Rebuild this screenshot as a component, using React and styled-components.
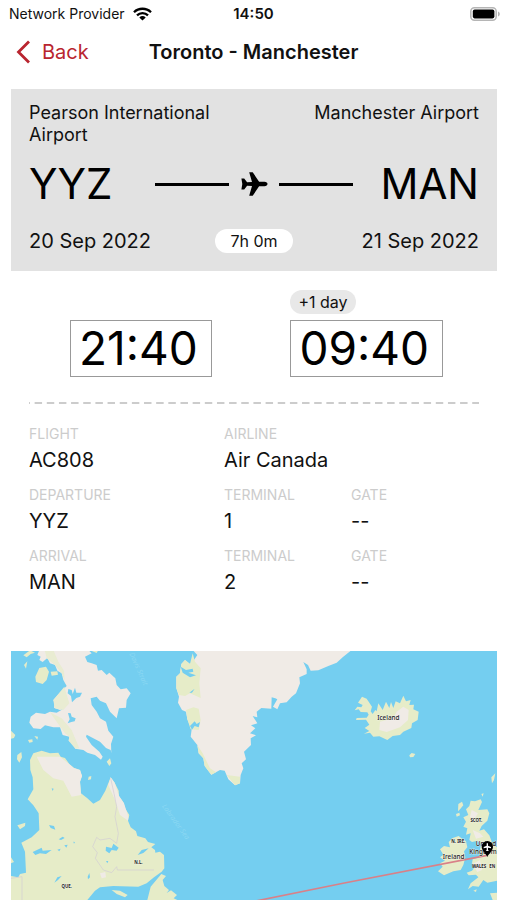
import React from 'react';
import styled, { createGlobalStyle } from 'styled-components';


const GlobalStyle = createGlobalStyle`
  * {
    box-sizing: border-box;
  }
  body {
    margin: 0;
    background: #fff;
    color: #111;
    font-family: Inter, 'Liberation Sans', sans-serif;
  }
  `;

// declare styled components
const StatusBar = styled.div`
  display: grid;
  grid-template-columns: 1fr auto 1fr;
  align-items: center;
  height: 27px;
  padding: 0 7px;
  font-size: 14px;
  `;

const Carrier = styled.div`
  display: flex;
  align-items: center;
  gap: 8px;
  padding-left: 2px;
  white-space: nowrap;
  `;

const Clock = styled.time`
  font-size: 15px;
  font-weight: 600;
  `;

const BatteryIcon = styled.svg`
  justify-self: end;
  `;

const NavBar = styled.header`
  display: grid;
  grid-template-columns: 1fr auto 1fr;
  align-items: center;
  height: 49px;
  padding: 0 16px;
  `;

const BackButton = styled.button`
  display: flex;
  align-items: center;
  gap: 11px;
  justify-self: start;
  padding: 0;
  border: 0;
  background: none;
  color: #b9252f;
  font: inherit;
  font-size: 20px;
  cursor: pointer;
  `;

const Title = styled.h1`
  margin: 0;
  font-size: 20px;
  font-weight: 600;
  white-space: nowrap;
  `;

const Main = styled.main`
  padding: 13px 10px 0 11px;
  `;

const RouteCard = styled.section`
  padding: 13px 18px 16px;
  background: #e2e2e2;
  `;

const Row = styled.div`
  display: flex;
  justify-content: space-between;
  align-items: ${props => props.$align || 'center'};
  `;

const Airport = styled.p`
  width: 200px;
  margin: 0;
  font-size: 18px;
  line-height: 22px;
  text-align: ${props => (props.$end ? 'right' : 'left')};
  `;

const CenteredRow = styled.div`
  display: grid;
  grid-template-columns: 1fr auto 1fr;
  align-items: center;
  margin-top: ${props => props.$gap}px;
  `;

const Code = styled.span`
  font-size: 42px;
  line-height: 54px;
  color: #000;
  text-align: ${props => (props.$end ? 'right' : 'left')};
  `;

const Path = styled.div`
  display: flex;
  align-items: center;
  gap: 11px;
  color: #000;
  `;

const Line = styled.span`
  width: 74px;
  height: 3px;
  background: #000;
  `;

const FlightDate = styled.time`
  font-size: 20px;
  line-height: 28px;
  text-align: ${props => (props.$end ? 'right' : 'left')};
  `;

const Pill = styled.span`
  padding: 0 ${props => (props.$wide ? 15 : 8)}px;
  border-radius: 12px;
  background: ${props => (props.$wide ? '#fff' : '#e8e8e8')};
  font-size: 16px;
  line-height: 24px;
  `;

const Times = styled(Row)`
  padding: 19px 54px 0 59px;
  `;

const TimeSlot = styled.div`
  display: flex;
  flex-direction: column;
  align-items: flex-start;
  gap: 6px;
  `;

const TimeBox = styled.time`
  padding: 0 13px 0 8px;
  border: 1px solid #999;
  font-size: 46px;
  line-height: 55px;
  color: #000;
  `;

const Divider = styled.hr`
  height: 2px;
  margin: 25px 18px 0;
  border: 0;
  background-image: linear-gradient(90deg, #ccc 1px, transparent 1px 6px, #ccc 6px);
  background-size: calc(100% / 37) 2px;
  `;

const Details = styled.dl`
  display: grid;
  grid-template-columns: 195fr 127fr 128fr;
  row-gap: 8px;
  margin: 19px 18px 53px;
  `;

const Field = styled.div`
  grid-column: ${props => (props.$wide ? 'span 2' : 'auto')};
  `;

const Label = styled.dt`
  color: #ccc;
  font-size: 14px;
  line-height: 21px;
  text-transform: uppercase;
  `;

const Value = styled.dd`
  margin: 0;
  font-size: 20px;
  line-height: 32px;
  `;

const MapSvg = styled.svg`
  display: block;
  width: 100%;
  height: auto;
  background: #74cef0;
  font-family: 'Noto Sans', sans-serif;
  `;

const fields = [
  { label: 'Flight', value: 'AC808' },
  { label: 'Airline', value: 'Air Canada', wide: true },
  { label: 'Departure', value: 'YYZ' },
  { label: 'Terminal', value: '1' },
  { label: 'Gate', value: '--' },
  { label: 'Arrival', value: 'MAN' },
  { label: 'Terminal', value: '2' },
  { label: 'Gate', value: '--' }
];

const WifiIcon = () => (
  <svg width='19' height='14' viewBox='0 0 19 14' aria-hidden='true'>
    <g fill='none' stroke='#000' strokeWidth='2.3'>
      <path d='M1 5.2a12.2 12.2 0 0 1 17 0'/>
      <path d='M4 8.4a7.9 7.9 0 0 1 11 0'/>
    </g>
    <path d='M9.5 13.5 6.3 10.4a4.7 4.7 0 0 1 6.4 0z'/>
  </svg>
);

const PlaneIcon = () => (
  <svg width='28' height='26' viewBox='0 0 28 26' aria-hidden='true'>
    <path d='M1.4 7.6h2.8l2.9 3.7 4.9-.4L9.2 1.2h3.5l6.4 9.5 5.4.1c1.8.1 3 1 3 2.2s-1.2 2.1-3 2.2l-5.4.1-6.4 9.5H9.2l2.8-9.7-4.9-.4-2.9 3.7H1.4l.9-5.4z'/>
  </svg>
);

const Battery = () => (
  <BatteryIcon width='30' height='14' viewBox='0 0 30 14' role='img' aria-label='Battery full'>
    <rect x='.8' y='.8' width='25.4' height='12.4' rx='3.6' fill='#fff' stroke='#b5b5b5' strokeWidth='1.5'/>
    <rect x='2.8' y='2.6' width='21.6' height='8.8' rx='1.8'/>
    <path d='M28 4.6c2.4.8 2.4 4 0 4.8z' fill='#b5b5b5'/>
  </BatteryIcon>
);

const RouteMap = () => (
  <MapSvg viewBox='0 0 1458 747' role='img' aria-label='Flight route map'>
    {/* Baffin Island and its neighbours */}
    <g transform='translate(-33 -33)' fill='#f0ebe6'>
      <path d='M118 30 112 45 122 50 118 60 128 66 142 54 150 70 165 75 172 92 185 100 190 120 200 138 178 160 160 180 164 190 162 203 180 210 193 205 170 218 150 215 135 222 108 218 92 230 88 248 100 265 122 267 135 256 160 262 180 262 188 285 208 290 206 302 220 312 226 326 250 330 262 338 285 345 303 359 308 350 298 335 275 315 258 290 260 284 280 295 300 305 318 324 332 330 334 340 333 312 340 290 325 272 318 245 300 235 290 215 275 195 272 175 290 170 300 182 318 190 330 215 350 235 357 205 378 203 380 180 392 160 380 145 362 148 350 135 346 115 328 98 320 105 305 90 294 92 290 75 275 70 262 66 255 50 275 40 265 30z'/>
      <path fill='#e9ecd2' d='M134 30 140 55 165 75 185 100 194 122 192 92 175 65 160 30zM193 140 160 180 164 205 190 210 208 190zM150 217 170 245 195 280 208 290 206 302 226 326 238 325 215 270 185 235z'/>
      <path fill='#e6ecc8' d='M118 84 138 80 147 95 140 120 128 132 108 126 106 110zM152 95 172 94 174 104 155 107zM33 272 46 285 42 294 33 296zM84 300 97 298 98 306 88 308zM103 288 114 290 112 299zM52 345 64 336 66 352 58 368 51 358zM72 75 82 64 78 86zM70 46 90 31 105 38 92 42 80 52zM320 365 330 355 334 370 328 378zM268 30 295 30 290 39z'/>
      <path fill='#74cef0' d='M205 147 215 150 218 162 225 143 229 158 246 158 240 170 229 174 216 187 213 168 203 160zM204 219 212 220 215 230 227 235 224 244 214 246 203 250 209 238z'/>
    </g>
    {/* Quebec and Labrador */}
    <g transform='translate(-33 357)' fill='#e6ecc8'>
      <path d='M90-30 100-50 125-58 150-50 175-52 182-40 195-36 208-18 222-6 240 0 246 18 240 35 243 70 262 85 280 101 300 90 316 62 332 22 344 38 356 62 357 78 370 97 376 116 388 135 384 152 392 172 408 184 412 198 436 205 444 216 466 222 454 232 465 240 466 248 480 245 492 255 493 295 485 305 462 322 440 340 415 350 340 348 300 352 285 362 262 390 33 390 33 318 55 322 60 312 78 308 75 245 64 218 95 202 118 180 116 130 100 106 83 88 100 58 98 22 91 0zM484 312 498 318 488 330 493 348 507 360 500 369 513 361 531 375 521 385 532 390 442 390 452 350zM33 262 42 276 33 280zM335 360 360 362 383 375 375 382 350 372zM266 20 274 18 273 28 264 30zM52 166 76 158 75 168 60 178z'/>
      <path fill='#f0ebe6' d='M110-40 180-40 222-6 240 0 246 18 240 35 243 75 215 80 190 32 160 25 130 0zM325 45 332 22 344 38 357 78 372 100 385 140 384 152 360 135 345 90zM300 310 316 306 318 322 305 325z'/>
      <path fill='none' stroke='#d2ccd5' strokeWidth='2' d='M332 25 342 70 350 110 345 140 355 190 350 220 330 205 300 210 290 202 278 230 292 248 286 265 310 300 335 308 350 290 352 300 462 300M33 325 66 320 66 390'/>
      <path fill='#74cef0' d='M98 246 125 233 128 242 155 240 138 252 120 250 106 255zM147 165 162 168 166 179 152 174zM176 208 188 200 194 204 183 210zM193 226 203 224 199 233zM172 239 182 236 178 244zM155 55 161 56 158 63zM220 215 225 216 222 221zM318 230 335 234 340 221 356 233 350 242 335 240 328 250 317 242zM413 255 425 240 446 235 430 249zM163 338 172 322 185 318 174 330zM263 320 268 309 270 322 264 328zM318 273 325 273 322 280z'/>
    </g>
    {/* Greenland, then Iceland */}
    <g transform='translate(477 -33)' fill='#f0ebe6'>
      <path d='M68 30 82 45 72 60 60 72 45 60 34 72 30 100 19 110 19 145 27 170 24 188 36 210 48 215 52 238 65 268 62 290 82 315 86 340 100 355 104 378 124 404 150 390 164 392 175 418 195 436 210 430 212 405 220 385 215 370 228 358 222 335 243 315 242 295 258 286 240 280 256 265 243 256 262 250 248 228 262 232 260 215 274 204 304 206 305 172 316 175 322 178 309 200 322 208 330 190 350 187 365 170 378 160 390 130 388 112 410 102 410 88 400 66 414 75 422 92 445 91 475 78 500 68 518 52 545 30z'/>
      <path fill='#e6ecc8' d='M68 40 60 72 45 60 34 72 30 100 19 110 19 145 27 165 45 168 60 160 92 174 88 130 92 85 75 65zM48 210 70 202 86 206 92 240 86 270 62 268 52 238zM62 285 82 315 86 340 100 355 104 378 124 404 138 397 120 385 98 340zM170 405 195 436 210 430 210 410z'/>
      <path fill='#74cef0' d='M32 80 48 90 68 86 70 95 55 98 78 106 60 112 38 98zM58 158 74 146 66 158zM60 258 74 244 80 252 90 246 86 262 74 258 66 269z'/>
      <path fill='#e6ecc8' d='M576 170 590 176 606 200 602 214 608 222 616 210 620 214 625 190 638 210 648 185 658 204 663 186 670 204 677 184 690 190 700 167 708 184 722 180 718 195 732 194 730 208 746 215 743 240 726 250 724 264 700 275 690 285 668 288 652 300 628 289 610 290 600 278 582 281 598 273 584 264 598 254 588 239 558 240 560 234 590 233 596 224 592 217 572 216 566 208 554 211 562 200 574 202 578 195 564 188z'/>
      <path d='M700 200 716 210 714 240 690 262 650 276 628 270 630 245 670 235 680 215z'/>
    </g>
    {/* British Isles and the smaller islands north of them */}
    <g transform='translate(1167 357)' fill='#e6ecc8'>
      <path d='M212 92 225 94 242 88 246 96 235 120 262 118 268 130 262 152 245 168 238 182 252 178 268 196 277 220 291 232 291 332 262 338 250 330 236 350 218 348 204 358 212 340 235 322 228 314 206 316 200 308 216 302 225 290 216 280 218 268 245 260 240 238 244 222 232 212 216 216 208 210 212 190 198 194 202 175 190 170 198 155 190 142 205 135 198 118 208 108zM158 204 176 198 188 208 198 214 202 232 192 244 196 262 190 285 182 300 160 304 132 316 114 304 128 290 120 280 135 272 120 262 130 254 120 238 132 228 150 232 146 216zM175 102 186 95 190 106 180 118 174 124zM168 132 178 128 180 136 170 140zM274 22 286 10 282 30 276 40zM244 72 251 70 248 80zM220 362 230 358 228 366zM270 370 291 368 291 390 278 390zM28-44 35-51 46-48 40-39 30-38z'/>
      <path fill='#f0ebe6' d='M215 120 234 130 225 145 210 142zM218 180 240 190 250 200 228 206zM218 282 240 270 246 300 232 306z'/>
    </g>
    <path d='M690 759 1000 696 1428 613' fill='none' stroke='#d98088' strokeWidth='5'/>
    <g fill='#8ad8f3' fontSize='21' fontStyle='italic'>
      <text transform='translate(355 8) rotate(66)'>Davis Strait</text>
      <text transform='translate(452 466) rotate(54)'>Labrador Sea</text>
    </g>
    <g fill='#222' stroke='#f5f5ee' strokeWidth='2' paintOrder='stroke' textAnchor='middle'>
      <g fontSize='19' fontWeight='500'>
        <text x='1132' y='207'>Iceland</text>
        <text x='1328' y='623'>Ireland</text>
        <text x='1425' y='584'>United</text>
        <text x='1416' y='608'>Kingdom</text>
      </g>
      <g fontSize='13' fontWeight='700'>
        <text x='1396' y='512'>SCOT.</text>
        <text x='1342' y='576'>N. IRE.</text>
        <text x='1404' y='650'>WALES</text>
        <text x='1444' y='650'>EN</text>
        <text x='382' y='638'>N.L.</text>
        <text x='167' y='710'>QUE.</text>
      </g>
    </g>
    <path d='M1429 618c-3-10-17-19-17-31a17 17 0 0 1 34 0c0 12-14 21-17 31z'/>
    <path d='M1427 577h4v7l9 4v4l-9-2v7l3 3h-10l3-3v-7l-9 2v-4l9-4z' fill='#fff'/>
  </MapSvg>
);

// declare main component
const App = () => {
  return (
    <>
      <GlobalStyle/>
      <StatusBar>
        <Carrier>Network Provider <WifiIcon/></Carrier>
        <Clock>14:50</Clock>
        <Battery/>
      </StatusBar>
      <NavBar>
        <BackButton type='button'>
          <svg width='15' height='24' viewBox='0 0 15 24' aria-hidden='true'>
            <path d='M13 1.5 2.5 12 13 22.5' fill='none' stroke='currentColor' strokeWidth='2.8'/>
          </svg>
          Back
        </BackButton>
        <Title>Toronto - Manchester</Title>
      </NavBar>
      <Main>
        <RouteCard>
          <Row $align='flex-start'>
            <Airport>Pearson International Airport</Airport>
            <Airport $end>Manchester Airport</Airport>
          </Row>
          <CenteredRow $gap={11}>
            <Code>YYZ</Code>
            <Path>
              <Line/>
              <PlaneIcon/>
              <Line/>
            </Path>
            <Code $end>MAN</Code>
          </CenteredRow>
          <CenteredRow $gap={16}>
            <FlightDate>20 Sep 2022</FlightDate>
            <Pill $wide>7h 0m</Pill>
            <FlightDate $end>21 Sep 2022</FlightDate>
          </CenteredRow>
        </RouteCard>
        <Times $align='flex-end'>
          <TimeSlot>
            <TimeBox>21:40</TimeBox>
          </TimeSlot>
          <TimeSlot>
            <Pill>+1 day</Pill>
            <TimeBox>09:40</TimeBox>
          </TimeSlot>
        </Times>
        <Divider/>
        <Details>
          {fields.map((field, i) => (
            <Field key={i} $wide={field.wide}>
              <Label>{field.label}</Label>
              <Value>{field.value}</Value>
            </Field>
          ))}
        </Details>
        <RouteMap/>
      </Main>
    </>
  );
};

export default App;
